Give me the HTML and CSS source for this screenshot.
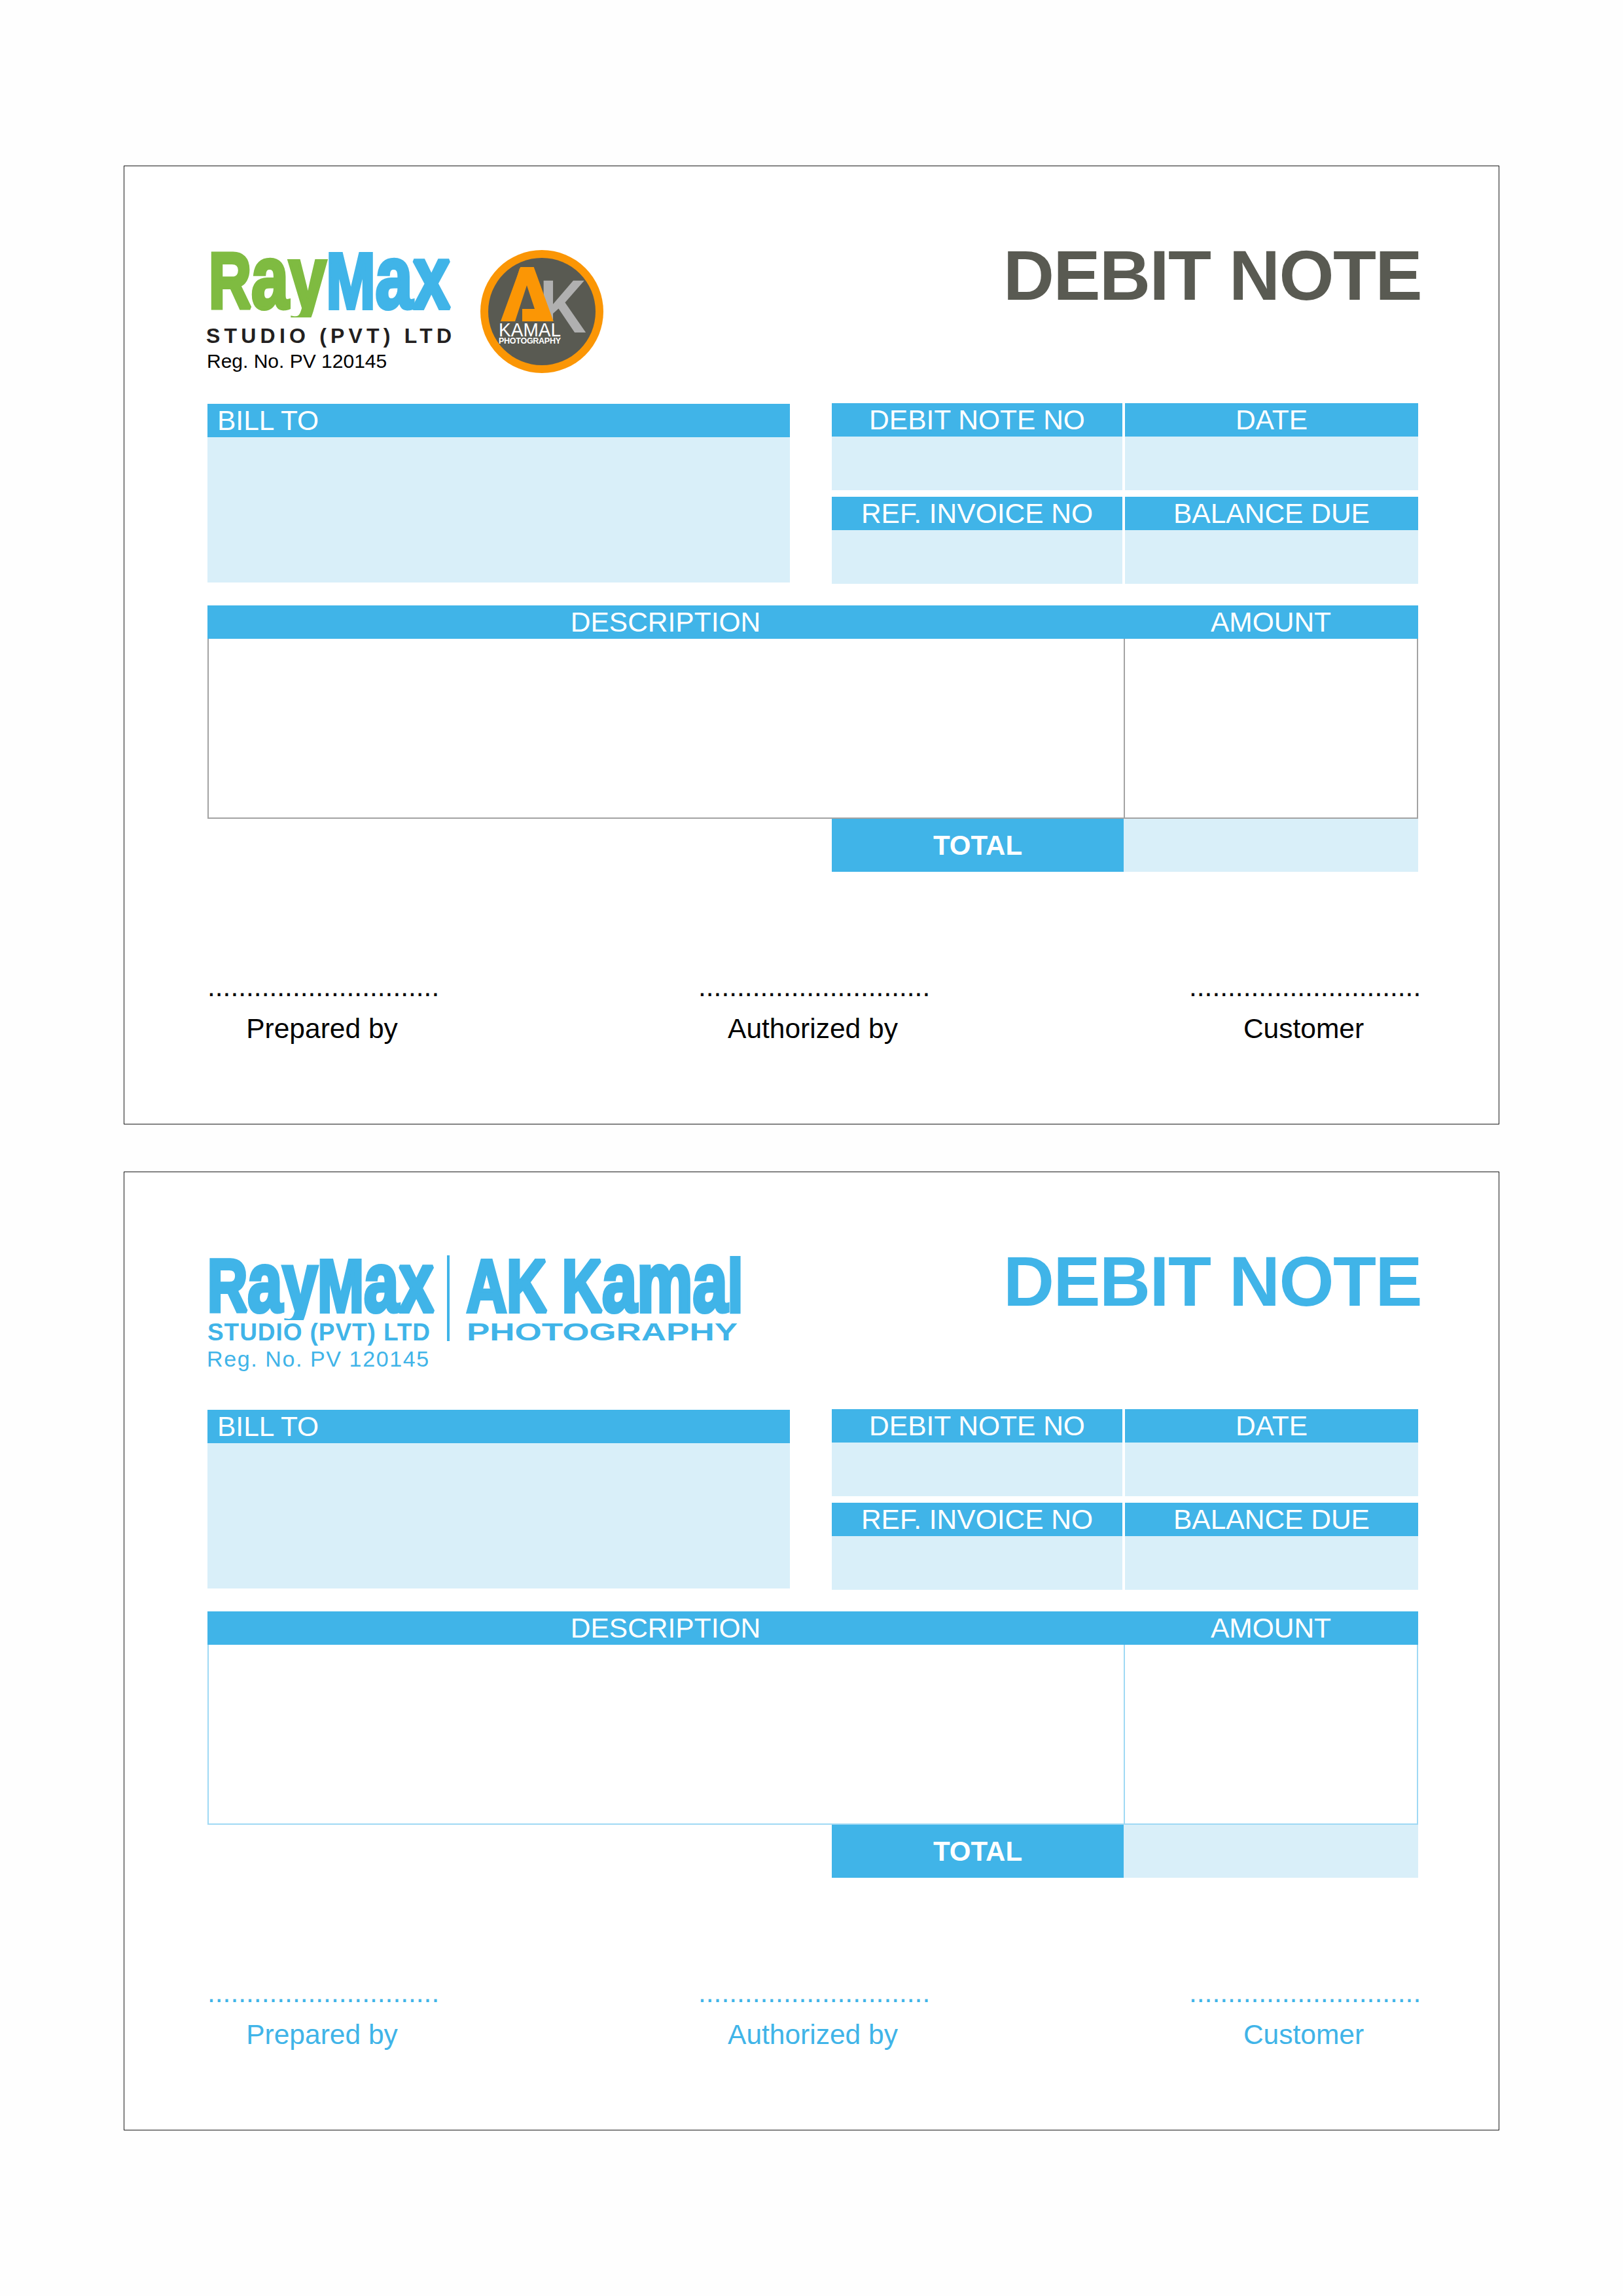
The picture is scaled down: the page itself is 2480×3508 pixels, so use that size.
FILE: index.html
```html
<!DOCTYPE html>
<html lang="en">
<head>
    <meta charset="UTF-8">
    <meta name="viewport" content="width=device-width, initial-scale=1.0">
    <title>Debit Note</title>
    <link rel="stylesheet" href="styles.css">
</head>
<body>
    <div class="sheet">
        <!-- Colour version -->
        <div class="note">
            <div class="top">
                <div class="brand">
                    <svg class="wordmark" width="376" height="104" viewBox="0 0 376 104">
                        <text class="mark-text" transform="translate(2,90) scale(.745,1)" font-size="121"><tspan class="green">R</tspan><tspan class="green" font-size="138">ay</tspan><tspan>M</tspan><tspan font-size="138">ax</tspan></text>
                    </svg>
                    <p class="studio">STUDIO (PVT) LTD</p>
                    <p class="reg">Reg. No. PV 120145</p>
                </div>
                <svg class="badge" width="190" height="190" viewBox="0 0 190 190">
                    <circle cx="95" cy="95" r="94" fill="#fb9605"/>
                    <circle cx="95" cy="95" r="82" fill="#595a52"/>
                    <g transform="translate(-23,-21)">
                        <text class="badge-k" x="114" y="148" font-size="115" textLength="72" lengthAdjust="spacingAndGlyphs">K</text>
                        <polygon points="100,131 146,131 156,150 100,150" fill="#595a52"/>
                        <text class="badge-a" x="52" y="131" font-size="121" textLength="87" lengthAdjust="spacingAndGlyphs">A</text>
                        <polygon points="84,50 104,50 130,125 130,131 60,131" fill="#fb9605"/>
                        <polygon points="95,76 107,112 88,112 88,131 77,131" fill="#595a52"/>
                        <text class="badge-kamal" x="52" y="154" font-size="30" textLength="95" lengthAdjust="spacingAndGlyphs">KAMAL</text>
                        <text class="badge-photo" x="52" y="165" font-size="12.5" textLength="95" lengthAdjust="spacing">PHOTOGRAPHY</text>
                    </g>
                </svg>
                <h1 class="title">DEBIT NOTE</h1>
            </div>

            <div class="info">
                <div class="bill">
                    <div class="head left">BILL TO</div>
                    <div class="bill-body"></div>
                </div>
                <div class="refs">
                    <div class="ref"><div class="head">DEBIT NOTE NO</div><div class="ref-body"></div></div>
                    <div class="ref"><div class="head">DATE</div><div class="ref-body"></div></div>
                    <div class="ref"><div class="head">REF. INVOICE NO</div><div class="ref-body"></div></div>
                    <div class="ref"><div class="head">BALANCE DUE</div><div class="ref-body"></div></div>
                </div>
            </div>

            <div class="items">
                <div class="head">DESCRIPTION</div>
                <div class="head">AMOUNT</div>
                <div class="item-cell"></div>
                <div class="item-cell amount-cell"></div>
            </div>
            <div class="total">
                <div class="total-label">TOTAL</div>
                <div class="total-value"></div>
            </div>

            <div class="signs">
                <div class="sign"><div class="dots">..............................</div><div class="sign-name">Prepared by</div></div>
                <div class="sign"><div class="dots">..............................</div><div class="sign-name">Authorized by</div></div>
                <div class="sign"><div class="dots">..............................</div><div class="sign-name">Customer</div></div>
            </div>
        </div>

        <!-- Single colour version -->
        <div class="note mono">
            <div class="top">
                <div class="brand">
                    <svg class="wordmark-mono" width="830" height="138" viewBox="0 0 830 138">
                        <defs>
                            <clipPath id="markClip"><rect x="0" y="0" width="830" height="99"/></clipPath>
                        </defs>
                        <g clip-path="url(#markClip)">
                            <text class="mark-text" transform="translate(0,86) scale(.745,1)" font-size="114">R<tspan font-size="129">ay</tspan>M<tspan font-size="129">ax</tspan></text>
                            <text class="mark-text" transform="translate(396,86) scale(.743,1)" font-size="114">AK K<tspan font-size="129">ama</tspan>l</text>
                        </g>
                        <rect x="366" y="0" width="4" height="131" fill="#40b4e8"/>
                        <text class="sub-text" x="0" y="130" font-size="37" textLength="340" lengthAdjust="spacing">STUDIO (PVT) LTD</text>
                        <text class="sub-text" x="396" y="130" font-size="37" textLength="414" lengthAdjust="spacingAndGlyphs">PHOTOGRAPHY</text>
                    </svg>
                    <p class="reg">Reg. No. PV 120145</p>
                </div>
                <h1 class="title">DEBIT NOTE</h1>
            </div>

            <div class="info">
                <div class="bill">
                    <div class="head left">BILL TO</div>
                    <div class="bill-body"></div>
                </div>
                <div class="refs">
                    <div class="ref"><div class="head">DEBIT NOTE NO</div><div class="ref-body"></div></div>
                    <div class="ref"><div class="head">DATE</div><div class="ref-body"></div></div>
                    <div class="ref"><div class="head">REF. INVOICE NO</div><div class="ref-body"></div></div>
                    <div class="ref"><div class="head">BALANCE DUE</div><div class="ref-body"></div></div>
                </div>
            </div>

            <div class="items">
                <div class="head">DESCRIPTION</div>
                <div class="head">AMOUNT</div>
                <div class="item-cell"></div>
                <div class="item-cell amount-cell"></div>
            </div>
            <div class="total">
                <div class="total-label">TOTAL</div>
                <div class="total-value"></div>
            </div>

            <div class="signs">
                <div class="sign"><div class="dots">..............................</div><div class="sign-name">Prepared by</div></div>
                <div class="sign"><div class="dots">..............................</div><div class="sign-name">Authorized by</div></div>
                <div class="sign"><div class="dots">..............................</div><div class="sign-name">Customer</div></div>
            </div>
        </div>
    </div>
</body>
</html>
```

FILE: styles.css
```css
body {
    margin: 0;
    background-color: #fefefe;
    font-family: "Liberation Sans", Arial, sans-serif;
    color: #000;
}
p, h1 {
    margin: 0;
}
.sheet {
    width: 2102px;
    padding: 253px 0 0 189px;
}
.note {
    box-sizing: border-box;
    height: 1465px;
    margin-bottom: 72px;
    padding: 127px 122px 0 127px;
    border: 1px solid #1a1a1a;
    background-color: #fff;
}
.top {
    display: flex;
    align-items: flex-start;
    height: 235px;
}
.brand {
    width: 390px;
}
.wordmark {
    display: block;
}
.wordmark-mono {
    display: block;
}
.mark-text {
    font-weight: 700;
    fill: #40b4e8;
    stroke: #40b4e8;
    stroke-width: 6px;
    stroke-miterlimit: 2;
}
.green {
    fill: #7fbb41;
    stroke: #7fbb41;
}
.sub-text {
    font-weight: 700;
    fill: #40b4e8;
}
.studio {
    margin: 10px 0 0 -2px;
    font-size: 32px;
    line-height: 37px;
    font-weight: 700;
    letter-spacing: 6.2px;
    color: #231f20;
    white-space: nowrap;
}
.reg {
    margin: 2px 0 0 -1px;
    font-size: 30px;
    line-height: 36px;
    white-space: nowrap;
}
.badge {
    display: block;
    flex: none;
    margin-left: 26px;
}
.badge-k {
    font-weight: 700;
    fill: #b0b0b0;
}
.badge-a {
    font-weight: 700;
    fill: #fb9605;
}
.badge-kamal {
    fill: #fff;
}
.badge-photo {
    font-weight: 700;
    fill: #fff;
}
.title {
    margin-left: auto;
    margin-right: -4px;
    font-size: 108px;
    line-height: 80px;
    font-weight: 700;
    letter-spacing: -1.5px;
    color: #595a52;
    white-space: nowrap;
}
.info {
    display: flex;
    justify-content: space-between;
    width: 1850px;
}
.bill {
    width: 890px;
    margin-top: 1px;
}
.head {
    height: 51px;
    background-color: #40b4e8;
    color: #fff;
    font-size: 42.5px;
    line-height: 51px;
    text-align: center;
    white-space: nowrap;
}
.left {
    padding-left: 15px;
    text-align: left;
}
.bill-body {
    height: 222px;
    background-color: #d9eff9;
}
.refs {
    display: grid;
    grid-template-columns: 444px 448px;
    gap: 10px 4px;
}
.ref-body {
    height: 82px;
    background-color: #d9eff9;
}
.items {
    display: grid;
    grid-template-columns: 1400px 450px;
    grid-template-rows: 51px 275px;
    width: 1850px;
    margin-top: 33px;
}
.item-cell {
    border: solid #a3a3a3;
    border-width: 0 0 2px 2px;
}
.amount-cell {
    border-right-width: 2px;
}
.total {
    display: grid;
    grid-template-columns: 446px 450px;
    margin-left: 954px;
    height: 81px;
}
.total-label {
    background-color: #40b4e8;
    color: #fff;
    font-size: 42px;
    line-height: 81px;
    font-weight: 700;
    text-align: center;
}
.total-value {
    background-color: #d9eff9;
}
.signs {
    display: flex;
    justify-content: space-between;
    width: 1850px;
    margin-top: 152px;
}
.sign {
    width: 350px;
    font-size: 42.5px;
    text-align: center;
}
.dots {
    line-height: 47px;
    white-space: nowrap;
}
.sign-name {
    margin-top: 17px;
    line-height: 47px;
}

/* single colour version */
.mono .item-cell {
    border-color: #9fd9f4;
}
.mono .title,
.mono .reg,
.mono .dots,
.mono .sign-name {
    color: #40b4e8;
}
.mono .reg {
    margin-top: 2px;
    font-size: 34px;
    letter-spacing: 1.6px;
}
```
